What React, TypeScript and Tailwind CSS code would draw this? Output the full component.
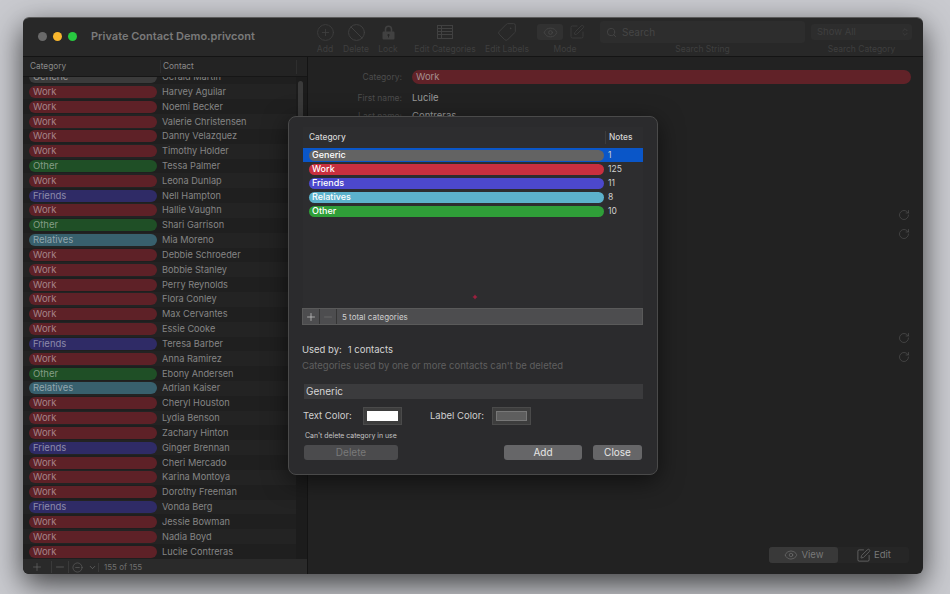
import { Ban, Eye, SquarePen, Search, ChevronsUpDown, Plus, Minus, ChevronDown, RotateCw, CirclePlus, CircleMinus, Tag } from 'lucide-react';

type Kind = 'Generic' | 'Work' | 'Friends' | 'Relatives' | 'Other';

const dimPill: Record<Kind, string> = {
  Generic: 'bg-[#3b3b3b]',
  Work: 'bg-[#5e2127]',
  Friends: 'bg-[#2f2b66]',
  Relatives: 'bg-[#38606d]',
  Other: 'bg-[#1f4f26]',
};

const contacts: Array<[Kind, string]> = [
  ['Generic', 'Gerald Martin'],
  ['Work', 'Harvey Aguilar'],
  ['Work', 'Noemi Becker'],
  ['Work', 'Valerie Christensen'],
  ['Work', 'Danny Velazquez'],
  ['Work', 'Timothy Holder'],
  ['Other', 'Tessa Palmer'],
  ['Work', 'Leona Dunlap'],
  ['Friends', 'Nell Hampton'],
  ['Work', 'Hallie Vaughn'],
  ['Other', 'Shari Garrison'],
  ['Relatives', 'Mia Moreno'],
  ['Work', 'Debbie Schroeder'],
  ['Work', 'Bobbie Stanley'],
  ['Work', 'Perry Reynolds'],
  ['Work', 'Flora Conley'],
  ['Work', 'Max Cervantes'],
  ['Work', 'Essie Cooke'],
  ['Friends', 'Teresa Barber'],
  ['Work', 'Anna Ramirez'],
  ['Other', 'Ebony Andersen'],
  ['Relatives', 'Adrian Kaiser'],
  ['Work', 'Cheryl Houston'],
  ['Work', 'Lydia Benson'],
  ['Work', 'Zachary Hinton'],
  ['Friends', 'Ginger Brennan'],
  ['Work', 'Cheri Mercado'],
  ['Work', 'Karina Montoya'],
  ['Work', 'Dorothy Freeman'],
  ['Friends', 'Vonda Berg'],
  ['Work', 'Jessie Bowman'],
  ['Work', 'Nadia Boyd'],
  ['Work', 'Lucile Contreras'],
];

const categories: Array<{ name: Kind; notes: number; color: string }> = [
  { name: 'Generic', notes: 1, color: 'bg-[#636363]' },
  { name: 'Work', notes: 125, color: 'bg-[#c92f3f]' },
  { name: 'Friends', notes: 11, color: 'bg-[#4c48cc]' },
  { name: 'Relatives', notes: 8, color: 'bg-[#5cb2cc]' },
  { name: 'Other', notes: 10, color: 'bg-[#2f9e38]' },
];

function LockIcon() {
  return (
    <svg width="13" height="15" viewBox="0 0 13 15" fill="none">
      <path d="M3.5 7V4.2a3 3 0 0 1 6 0V7" stroke="currentColor" strokeWidth="1.6" />
      <path fillRule="evenodd" clipRule="evenodd" d="M1.5 6.5h10a1 1 0 0 1 1 1v6a1 1 0 0 1-1 1h-10a1 1 0 0 1-1-1v-6a1 1 0 0 1 1-1zM6.5 9a1.1 1.1 0 0 0-.5 2.1V12.6h1V11.1A1.1 1.1 0 0 0 6.5 9z" fill="currentColor" />
    </svg>
  );
}

function CategoriesIcon() {
  return (
    <svg width="16" height="14" viewBox="0 0 16 14" fill="none" stroke="currentColor" strokeWidth="1">
      <rect x="0.5" y="0.5" width="15" height="13" />
      <path d="M0.5 3.5h15M0.5 6.5h15M0.5 9.5h15M4.5 0.5v13" />
    </svg>
  );
}

function ToolButton({ icon, label, width }: { icon: React.ReactNode; label: string; width: string }) {
  return (
    <div className={`flex flex-col items-center gap-[1px] ${width}`}>
      <div className="flex h-[22px] items-center justify-center text-[#414141]">{icon}</div>
      <span className="whitespace-nowrap text-[8.5px] leading-[10px] text-[#3f3f3f]">{label}</span>
    </div>
  );
}

function Toolbar() {
  return (
    <div className="flex h-[39px] shrink-0 items-start border-b border-[#141414] bg-[#282828]">
      <div className="flex w-[292px] items-center pl-[15px] pt-[11px]">
        <span className="flex gap-[6px]">
          <span className="size-[9px] rounded-full bg-[#6a6a6a]" />
          <span className="size-[9px] rounded-full bg-[#f8b62d]" />
          <span className="size-[9px] rounded-full bg-[#28c840]" />
        </span>
        <span className="ml-[14px] whitespace-nowrap text-[11px] font-semibold leading-[15px] text-[#7a7a7a]">
          Private Contact Demo.privcont
        </span>
      </div>
      <div className="flex pt-[3px]">
        <ToolButton width="w-[20px]" label="Add" icon={<CirclePlus size={19} strokeWidth={1} />} />
        <ToolButton width="w-[26px] ml-[8px]" label="Delete" icon={<Ban size={19} strokeWidth={1.2} />} />
        <ToolButton width="w-[20px] ml-[9px]" label="Lock" icon={<LockIcon />} />
        <ToolButton width="w-[60px] ml-[17px]" label="Edit Categories" icon={<CategoriesIcon />} />
        <ToolButton width="w-[44px] ml-[10px]" label="Edit Labels" icon={<Tag size={20} strokeWidth={1} className="rotate-90" />} />
        <div className="ml-[8px] flex w-[56px] flex-col items-center gap-[1px]">
          <div className="flex h-[22px] w-full items-center">
            <span className="flex h-[16px] w-[26px] items-center justify-center rounded-[3px] bg-[#313131] text-[#4a4a4a]">
              <Eye size={15} strokeWidth={1.2} />
            </span>
            <span className="ml-[6px] text-[#414141]">
              <SquarePen size={16} strokeWidth={1.1} />
            </span>
          </div>
          <span className="text-[8.5px] leading-[10px] text-[#3f3f3f]">Mode</span>
        </div>
        <div className="ml-[7px] flex w-[205px] flex-col items-center gap-[1px]">
          <div className="flex h-[22px] w-full items-center gap-[5px] rounded-[3px] bg-[#2d2d2d] pl-[6px] text-[#454545]">
            <Search size={11} strokeWidth={2} />
            <span className="text-[10px] leading-[12px]">Search</span>
          </div>
          <span className="text-[8.5px] leading-[10px] text-[#3f3f3f]">Search String</span>
        </div>
        <div className="ml-[6px] flex w-[101px] flex-col items-center gap-[1px]">
          <div className="flex h-[22px] w-full items-center justify-between py-[3px]">
            <div className="flex h-[16px] w-full items-center justify-between rounded-[3px] bg-[#2d2d2d] pl-[6px] pr-[2px] text-[#3f3f3f]">
              <span className="text-[9.5px] leading-[12px]">Show All</span>
              <ChevronsUpDown size={10} strokeWidth={2} />
            </div>
          </div>
          <span className="text-[8.5px] leading-[10px] text-[#3f3f3f]">Search Category</span>
        </div>
      </div>
    </div>
  );
}

function Sidebar() {
  return (
    <div className="flex w-[285px] shrink-0 flex-col border-r border-[#141414] bg-[#1f1f1f]">
      <div className="flex h-[20px] shrink-0 items-center border-b border-[#161616] bg-[#232323] text-[8.3px] text-[#8a8a8a]">
        <span className="w-[137px] pl-[7px]">Category</span>
        <span className="flex-1 border-l border-[#2e2e2e] pl-[2px]">Contact</span>
        <span className="mr-[10px] h-[14px] border-l border-[#2e2e2e]" />
      </div>
      <div className="relative flex-1 overflow-hidden">
        <div className="-mt-[7.4px]">
          {contacts.map(([kind, name], i) => (
            <div
              key={name}
              className={`flex h-[14.84px] items-center ${i % 2 === 0 ? 'bg-[#1f1f1f]' : 'bg-[#232323]'}`}
            >
              <div className={`ml-[6px] flex h-[12px] w-[128px] items-center rounded-full pl-[4px] ${dimPill[kind]}`}>
                <span className="text-[9.5px] leading-[12px] text-white/45">{kind}</span>
              </div>
              <span className="ml-[5px] whitespace-nowrap text-[9.2px] leading-[12px] text-[#858585]">
                {name}
              </span>
            </div>
          ))}
        </div>
        <div className="absolute right-0 top-0 h-full w-[11px] bg-[#1c1c1c]">
          <div className="ml-[2px] mt-[4px] h-[110px] w-[5px] rounded-full bg-[#3a3a3a]" />
        </div>
      </div>
      <div className="flex h-[15px] shrink-0 items-center bg-[#2a2a2a] pt-[1px] text-[#6a6a6a]">
        <span className="flex w-[29px] justify-center border-r border-[#3a3a3a]">
          <Plus size={12} strokeWidth={1.3} />
        </span>
        <span className="flex w-[17px] justify-center border-r border-[#3a3a3a]">
          <Minus size={12} strokeWidth={1.3} />
        </span>
        <span className="flex w-[16px] justify-center">
          <CircleMinus size={11} strokeWidth={1.2} />
        </span>
        <span className="flex w-[14px] justify-end border-r border-[#3a3a3a] pr-[1px]">
          <ChevronDown size={9} strokeWidth={2} />
        </span>
        <span className="ml-[5px] text-[8px] text-[#707070]">155 of 155</span>
      </div>
    </div>
  );
}

function Detail() {
  return (
    <div className="flex flex-1 flex-col bg-[#222222]">
      <div className="flex items-center pt-[13px]">
        <span className="w-[94px] text-right text-[8.5px] leading-[14px] text-[#4c4c4c]">Category:</span>
        <div className="ml-[10px] mr-[12px] flex h-[14px] flex-1 items-center rounded-full bg-[#612228] pl-[4px]">
          <span className="text-[9.5px] text-[#a58f8f]">Work</span>
        </div>
      </div>
      <div className="flex items-center pt-[7px]">
        <span className="w-[94px] text-right text-[8.5px] leading-[14px] text-[#4c4c4c]">First name:</span>
        <span className="ml-[10px] text-[9.5px] leading-[14px] text-[#9a9a9a]">Lucile</span>
      </div>
      <div className="flex items-center pt-[4px]">
        <span className="w-[94px] text-right text-[8.5px] leading-[14px] text-[#4c4c4c]">Last name:</span>
        <span className="ml-[10px] text-[9.5px] leading-[14px] text-[#9a9a9a]">Contreras</span>
      </div>
      <div className="mr-[13px] mt-[86px] flex flex-col items-end gap-[7px] text-[#525252]">
        <RotateCw size={12} strokeWidth={1.3} />
        <RotateCw size={12} strokeWidth={1.3} />
      </div>
      <div className="mr-[13px] mt-[92px] flex flex-col items-end gap-[7px] text-[#525252]">
        <RotateCw size={12} strokeWidth={1.3} />
        <RotateCw size={12} strokeWidth={1.3} />
      </div>
      <div className="mt-auto mb-[11px] mr-[14px] flex h-[16px] w-[140px] self-end rounded-[3px] bg-[#262626] text-[9.5px] text-[#787878]">
        <span className="flex w-[69px] items-center justify-center gap-[4px] rounded-[3px] bg-[#393939]">
          <Eye size={14} strokeWidth={1} />
          View
        </span>
        <span className="flex flex-1 items-center justify-center gap-[3px]">
          <SquarePen size={15} strokeWidth={1.1} />
          Edit
        </span>
      </div>
    </div>
  );
}

function CategorySheet() {
  return (
    <div className="absolute left-[265px] top-[98px] flex h-[359px] w-[370px] flex-col rounded-[8px] border border-[#4a4a4a] bg-[#2b2b2d] px-[14px] pt-[10px] shadow-[0_6px_24px_rgba(0,0,0,0.55)]">
      <div className="flex h-[181px] flex-col bg-[#2d2d2f]">
        <div className="flex h-[21px] shrink-0 items-center text-[8.3px] font-medium text-[#d4d4d4]">
          <span className="w-[302px] pl-[6px]">Category</span>
          <span className="border-l border-[#3c3c3c] pl-[3px]">Notes</span>
        </div>
        {categories.map((c, i) => (
          <div
            key={c.name}
            className={`flex h-[14.1px] items-center ${i === 0 ? 'bg-[#0a56c8]' : ''}`}
          >
            <div className={`ml-[6px] flex h-[11px] w-[295px] items-center rounded-full pl-[3px] ${c.color}`}>
              <span className="text-[9px] font-medium leading-[12px] text-white">{c.name}</span>
            </div>
            <span className="ml-[4px] text-[8.5px] text-[#d0d0d0]">{c.notes}</span>
          </div>
        ))}
        <div className="flex flex-1 items-end justify-center pb-[8px] pl-[4px]">
          <Plus size={6} strokeWidth={4} className="text-[#c01c44]" />
        </div>
      </div>
      <div className="-ml-[1px] flex h-[17px] shrink-0 items-center border border-[#5a5a5a] bg-[#4d4d4f] text-[#b8b8b8]">
        <span className="flex h-full w-[17px] items-center justify-center border-r border-[#353535]">
          <Plus size={12} strokeWidth={1.4} className="text-[#cfcfcf]" />
        </span>
        <span className="flex h-full w-[17px] items-center justify-center border-r border-[#353535] text-[#707070]">
          <Minus size={12} strokeWidth={1.4} />
        </span>
        <span className="ml-[5px] text-[8px] text-[#d0d0d0]">5 total categories</span>
      </div>
      <div className="-ml-[1px] mt-[18px] flex gap-[6px] text-[9.5px] leading-[14px] text-[#d4d4d4]">
        <span>Used by:</span>
        <span>1 contacts</span>
      </div>
      <div className="-ml-[1px] mt-[1px] whitespace-nowrap text-[9.5px] leading-[15px] text-[#5f5f5f]">
        Categories used by one or more contacts can't be deleted
      </div>
      <div className="ml-[1px] mt-[11px] flex h-[15px] items-center bg-[#3b3b3d] pl-[2px] text-[10px] text-[#d4d4d4]">
        Generic
      </div>
      <div className="mt-[8px] flex items-center text-[9.5px] text-[#cfcfcf]">
        <span className="w-[60px]">Text Color:</span>
        <span className="flex h-[18px] w-[39px] items-center justify-center border border-[#4a4a4a] bg-[#3d3d3d]">
          <span className="h-[10px] w-[31px] bg-white" />
        </span>
        <span className="ml-[28px] w-[62px]">Label Color:</span>
        <span className="flex h-[18px] w-[39px] items-center justify-center border border-[#4a4a4a] bg-[#3d3d3d]">
          <span className="h-[10px] w-[31px] border border-[#777777] bg-[#5e5e5e]" />
        </span>
      </div>
      <div className="ml-[2px] mt-[6px] text-[6.9px] leading-[10px] text-[#c4c4c4]">Can't delete category in use</div>
      <div className="mt-[4px] flex text-[10px]">
        <span className="ml-[1px] flex h-[15px] w-[94px] items-center justify-center rounded-[3px] bg-[#4b4b4d] text-[#797979]">
          Delete
        </span>
        <span className="ml-[106px] flex h-[15px] w-[78px] items-center justify-center rounded-[3px] bg-[#666668] text-[#e6e6e6]">
          Add
        </span>
        <span className="ml-[11px] flex h-[15px] w-[49px] items-center justify-center rounded-[3px] bg-[#666668] text-[#e6e6e6]">
          Close
        </span>
      </div>
    </div>
  );
}

export default function App() {
  return (
    <div className="h-[594px] w-[950px] overflow-hidden bg-[#c9cacf] pb-[20px] pl-[23px] pr-[27px] pt-[17px] font-['Inter',sans-serif]">
      <div className="relative flex h-full flex-col overflow-hidden rounded-[6px] border-t border-[#5a5a5a] shadow-[0_10px_30px_rgba(0,0,0,0.7)]">
        <Toolbar />
        <div className="flex min-h-0 flex-1">
          <Sidebar />
          <Detail />
        </div>
        <CategorySheet />
      </div>
    </div>
  );
}
